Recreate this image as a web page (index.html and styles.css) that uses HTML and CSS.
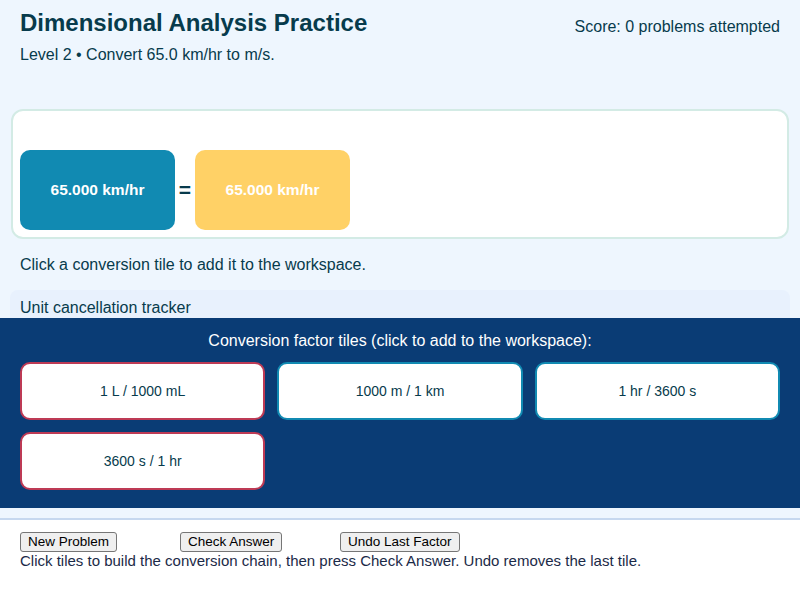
FILE: index.html
```html
<!DOCTYPE html>
<html lang="en">
<head>
<meta charset="utf-8">
<title>Dimensional Analysis Practice</title>
<link rel="stylesheet" href="styles.css">
</head>
<body>
<div class="page">
  <header class="header">
    <div class="titles">
      <h1 class="title">Dimensional Analysis Practice</h1>
      <p class="subtitle">Level 2 • Convert 65.0 km/hr to m/s.</p>
    </div>
    <div class="score">Score: 0 problems attempted</div>
  </header>

  <section class="workspace">
    <div class="chain">
      <div class="wtile start">65.000 km/hr</div>
      <div class="equals">=</div>
      <div class="wtile result">65.000 km/hr</div>
    </div>
  </section>

  <p class="hint">Click a conversion tile to add it to the workspace.</p>

  <div class="tracker">Unit cancellation tracker</div>

  <section class="bank">
    <div class="bank-title">Conversion factor tiles (click to add to the workspace):</div>
    <div class="tiles">
      <button class="ftile red">1 L / 1000 mL</button>
      <button class="ftile teal">1000 m / 1 km</button>
      <button class="ftile teal">1 hr / 3600 s</button>
      <button class="ftile red">3600 s / 1 hr</button>
    </div>
  </section>

  <div class="strip"></div>

  <footer class="controls">
    <div class="buttons">
      <button class="btn">New Problem</button>
      <button class="btn">Check Answer</button>
      <button class="btn">Undo Last Factor</button>
    </div>
    <div class="help">Click tiles to build the conversion chain, then press Check Answer. Undo removes the last tile.</div>
  </footer>
</div>
</body>
</html>
```

FILE: styles.css
```css
html, body {
  margin: 0;
  padding: 0;
}
body {
  background: #eef6fe;
  font-family: "Liberation Sans", Arial, sans-serif;
  color: #073b4c;
  width: 800px;
  height: 600px;
  overflow: hidden;
}
.page {
  display: flex;
  flex-direction: column;
  min-height: 600px;
}
.header {
  display: flex;
  justify-content: space-between;
  align-items: flex-start;
  padding: 8px 20px 0 20px;
}
.title {
  margin: 0;
  font-size: 24px;
  line-height: 30px;
  font-weight: bold;
  color: #073b4c;
}
.subtitle {
  margin: 7px 0 0 0;
  font-size: 16px;
  line-height: 19px;
}
.score {
  font-size: 16px;
  line-height: 19px;
  margin-top: 9px;
}
.workspace {
  margin: 45px 11px 0 11px;
  background: #ffffff;
  border: 2px solid #d3ebe5;
  border-radius: 12px;
  padding: 39px 7px 7px 7px;
}
.chain {
  display: flex;
  align-items: center;
  gap: 3px;
}
.wtile {
  width: 155px;
  height: 80px;
  border-radius: 10px;
  display: flex;
  align-items: center;
  justify-content: center;
  color: #ffffff;
  font-size: 15.5px;
  font-weight: bold;
}
.start {
  background: #118ab2;
}
.result {
  background: #ffd166;
}
.equals {
  font-size: 21px;
  font-weight: bold;
  color: #073b4c;
  width: 14px;
  text-align: center;
}
.hint {
  margin: 16px 20px 0 20px;
  font-size: 16px;
  line-height: 19px;
}
.tracker {
  margin: 16px 10px 0 10px;
  background: #e8f1fd;
  border-radius: 8px 8px 0 0;
  padding: 8px 10px 1px 10px;
  font-size: 16px;
  line-height: 19px;
}
.bank {
  background: #0a3c75;
  padding: 13px 20px 18px 20px;
}
.bank-title {
  color: #ffffff;
  text-align: center;
  font-size: 16px;
  line-height: 19px;
  margin-bottom: 12px;
}
.tiles {
  display: grid;
  grid-template-columns: repeat(3, 1fr);
  grid-auto-rows: 58px;
  gap: 12px;
}
.ftile {
  background: #ffffff;
  border: 2px solid #118ab2;
  border-radius: 10px;
  font-family: "Liberation Sans", Arial, sans-serif;
  font-size: 14px;
  color: #073b4c;
  padding: 0;
  margin: 0;
  cursor: pointer;
}
.ftile.red {
  border-color: #bd3a55;
}
.ftile.teal {
  border-color: #118ab2;
}
.strip {
  height: 10px;
  border-bottom: 2px solid #c6d8ef;
}
.controls {
  flex: 1;
  background: #ffffff;
  padding: 12px 20px 0 20px;
}
.buttons {
  display: grid;
  grid-template-columns: repeat(3, 160px);
  justify-items: start;
}
.btn {
  font-family: "Liberation Sans", Arial, sans-serif;
  font-size: 13.5px;
  line-height: 16px;
  height: 20px;
  padding: 0 7px;
  margin: 0;
  background: #efefef;
  border: 1px solid #767676;
  border-radius: 3px;
  color: #000000;
}
.help {
  font-size: 15px;
  line-height: 17px;
  color: #1b2a47;
}
```
